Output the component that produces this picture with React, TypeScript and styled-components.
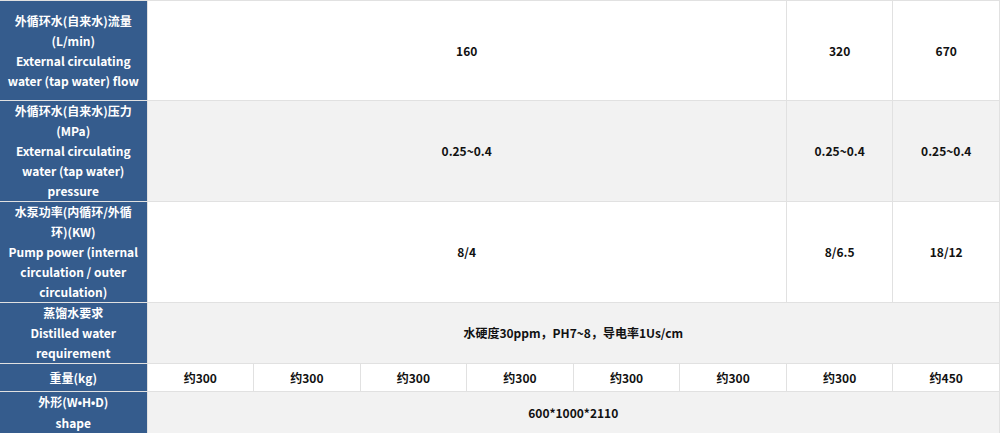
import React from 'react';
import styled, { createGlobalStyle } from 'styled-components';

const GlobalStyle = createGlobalStyle`
  html, body {
    margin: 0;
    padding: 0;
    background: #fff;
  }
  body {
    font-family: "Noto Sans CJK SC", "Noto Sans", sans-serif;
  }
`;

const headBg = '#355c8d';
const lineColor = '#e1e1e1';

const SpecTable = styled.table`
  width: 1000px;
  border-collapse: collapse;
  table-layout: fixed;
  font-size: 12px;
  font-weight: 700;
  line-height: 20px;
`;

const Row = styled.tr<{ $shade?: boolean; $h: number }>`
  height: ${({ $h }) => $h}px;
  background: ${({ $shade }) => ($shade ? '#f2f2f2' : '#fff')};
`;

const HeadCell = styled.th`
  padding: 0 4px;
  background: ${headBg};
  color: #fff;
  font-weight: 700;
  text-align: center;
  border: 1px solid ${lineColor};
  border-left: none;
`;

const Cell = styled.td`
  padding: 0 4px;
  color: #111;
  text-align: center;
  border: 1px solid ${lineColor};
`;

const Line = styled.div``;

// latin bullet, the CJK font draws it full width
const Dot = styled.span`
  font-family: "Liberation Sans", sans-serif;
`;

interface RowData {
  head: React.ReactNode[];
  height: number;
  cells: { text: string; span: number }[];
}

const rows: RowData[] = [
  {
    head: ['外循环水(自来水)流量', '(L/min)', 'External circulating', 'water (tap water) flow'],
    height: 100,
    cells: [
      { text: '160', span: 6 },
      { text: '320', span: 1 },
      { text: '670', span: 1 },
    ],
  },
  {
    head: ['外循环水(自来水)压力', '(MPa)', 'External circulating', 'water (tap water)', 'pressure'],
    height: 100,
    cells: [
      { text: '0.25~0.4', span: 6 },
      { text: '0.25~0.4', span: 1 },
      { text: '0.25~0.4', span: 1 },
    ],
  },
  {
    head: ['水泵功率(内循环/外循', '环)(KW)', 'Pump power (internal', 'circulation / outer', 'circulation)'],
    height: 100,
    cells: [
      { text: '8/4', span: 6 },
      { text: '8/6.5', span: 1 },
      { text: '18/12', span: 1 },
    ],
  },
  {
    head: ['蒸馏水要求', 'Distilled water', 'requirement'],
    height: 60,
    cells: [{ text: '水硬度30ppm，PH7~8，导电率1Us/cm', span: 8 }],
  },
  {
    head: ['重量(kg)'],
    height: 28,
    cells: [
      ...Array.from({ length: 7 }, () => ({ text: '约300', span: 1 })),
      { text: '约450', span: 1 },
    ],
  },
  {
    head: [
      <>外形(W<Dot>•</Dot>H<Dot>•</Dot>D)</>,
      'shape',
    ],
    height: 42,
    cells: [{ text: '600*1000*2110', span: 8 }],
  },
];

export default function App() {
  return (
    <>
      <GlobalStyle />
      <SpecTable>
        <colgroup>
          <col style={{ width: 147 }} />
          {Array.from({ length: 8 }, (_, i) => (
            <col key={i} />
          ))}
        </colgroup>
        <tbody>
          {rows.map((r, i) => (
            <Row key={i} $h={r.height} $shade={i % 2 === 1}>
              <HeadCell>
                {r.head.map((l, j) => (
                  <Line key={j}>{l}</Line>
                ))}
              </HeadCell>
              {r.cells.map((c, j) => (
                <Cell key={j} colSpan={c.span}>
                  {c.text}
                </Cell>
              ))}
            </Row>
          ))}
        </tbody>
      </SpecTable>
    </>
  );
}
